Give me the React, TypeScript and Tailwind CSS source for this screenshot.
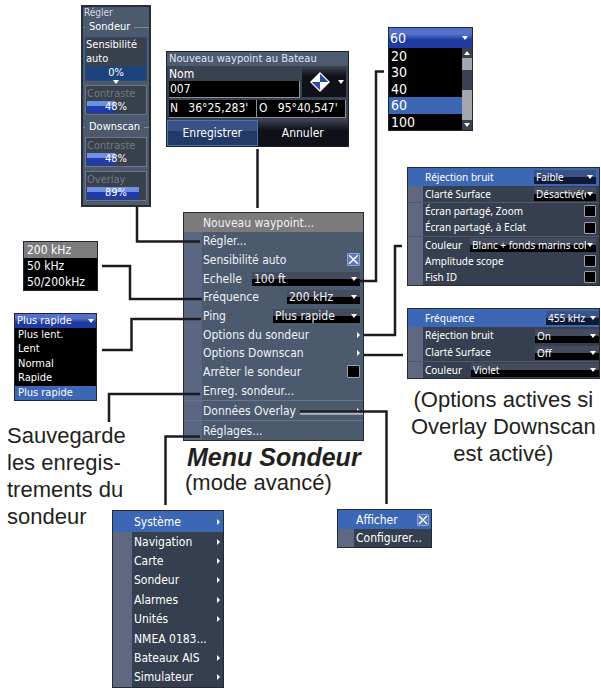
/**
 * Overview of the sonar menu (advanced mode): the main menu in the middle,
 * with each of its submenus and dialogs linked to the entry that opens it.
 */
import { useState } from 'react';
import type { ReactNode } from 'react';

function DownArrow({ className = '' }: { className?: string }) {
  return (
    <svg viewBox="0 0 6 4" className={`pointer-events-none h-1 w-1.5 fill-white ${className}`} aria-hidden="true">
      <path d="M0 0h6L3 4z" />
    </svg>
  );
}

function RightArrow() {
  return (
    <svg viewBox="0 0 3 6" className="h-1.5 w-[3px] shrink-0 fill-white" aria-hidden="true">
      <path d="M0 0l3 3-3 3z" />
    </svg>
  );
}

interface SelectRowProps {
  id: string;
  label: string;
  value: string;
  size: string;
  active?: boolean;
}

function SelectRow({ id, label, value, size, active }: SelectRowProps) {
  return (
    <div className="flex items-center justify-between gap-2">
      <label htmlFor={id} className="shrink-0">{label}</label>
      <div className={`relative ${size}`}>
        <select
          id={id}
          defaultValue={value}
          className={`block h-3.5 w-full appearance-none overflow-hidden bg-linear-to-b from-50% to-50% pr-2.5 pl-0.5 leading-3.5 outline-none ${
            active ? 'from-[#3a5288] to-[#101a38]' : 'from-[#434b5d] to-black'
          }`}
        >
          <option>{value}</option>
        </select>
        <DownArrow className="absolute top-[5px] right-[3px]" />
      </div>
    </div>
  );
}

function CheckRow({ id, label, checked = false, size }: { id: string; label: string; checked?: boolean; size: string }) {
  const [isChecked, setIsChecked] = useState(checked);
  return (
    <div className="flex items-center justify-between">
      <label htmlFor={id}>{label}</label>
      <span className={`relative block ${size}`}>
        <input
          id={id}
          type="checkbox"
          checked={isChecked}
          onChange={(e) => setIsChecked(e.target.checked)}
          className="block size-full appearance-none rounded-[1px] border border-[#9a9ea6] bg-black checked:border-[#8fa6d0] checked:bg-[#5877b4]"
        />
        {isChecked && (
          <svg viewBox="0 0 12 12" className="pointer-events-none absolute inset-0 size-full" aria-hidden="true">
            <path d="M2 2l8 8M10 2l-8 8" stroke="white" strokeWidth="1.4" />
          </svg>
        )}
      </span>
    </div>
  );
}

function LinkRow({ label, arrow = false }: { label: string; arrow?: boolean }) {
  return (
    <button type="button" className="flex w-full items-center justify-between text-left whitespace-nowrap">
      {label}
      {arrow && <RightArrow />}
    </button>
  );
}

function Gauge({ label, value, fill }: { label: string; value: string; fill: string }) {
  return (
    <div className="border border-[#6b7688] bg-[#39414d] p-px">
      <div className="leading-3.5 text-[#747a82]">{label}</div>
      <div className="relative h-3 bg-[#39414d] text-center leading-3">
        <div className={`absolute inset-y-0 left-0 bg-linear-to-b from-[#6f8fe0] from-40% to-[#1f3cae] to-40% ${fill}`} />
        <span className="relative">{value}</span>
      </div>
    </div>
  );
}

function GroupTitle({ children }: { children: ReactNode }) {
  return (
    <h3 className="mb-0.5 flex h-4 items-center gap-1 text-[11px]">
      <span className="h-px w-0.5 bg-[#7c889c]" />
      {children}
      <span className="h-px flex-1 bg-[#7c889c]" />
    </h3>
  );
}

function AdjustPanel() {
  return (
    <section className="absolute top-[5px] left-[81px] w-[70px] border-2 border-[#262c38] bg-[#4d596d] text-[11px] text-white">
      <h2 className="pl-px text-[10px] leading-3 text-[#d5dbe4]">Régler</h2>
      <GroupTitle>Sondeur</GroupTitle>
      <div className="mx-0.5 border border-[#2b4a7a] bg-[#39414d]">
        <div className="leading-3.5">Sensibilité<br />auto</div>
        <div className="relative bg-[#1d437c] text-center leading-3.5">
          0%
          <DownArrow className="absolute -bottom-1 left-1/2 -translate-x-1/2" />
        </div>
      </div>
      <div className="mx-0.5 mt-1">
        <Gauge label="Contraste" value="48%" fill="w-[48%]" />
      </div>
      <div className="mt-1">
        <GroupTitle>Downscan</GroupTitle>
      </div>
      <div className="mx-0.5 mb-1 flex flex-col gap-1">
        <Gauge label="Contraste" value="48%" fill="w-[48%]" />
        <Gauge label="Overlay" value="89%" fill="w-[89%]" />
      </div>
    </section>
  );
}

function WaypointDialog() {
  return (
    <form
      className="absolute top-[51px] left-[166px] w-[183px] border border-[#1d222c] bg-[#3a4252] text-xs text-white"
      onSubmit={(e) => e.preventDefault()}
    >
      <h2 className="bg-[#4d5a70] pl-0.5 font-['DejaVu_Sans',sans-serif] text-[10px] leading-3.5 whitespace-nowrap text-[#dfe5ee]">
        Nouveau waypoint au Bateau
      </h2>
      <div className="flex gap-0.5 px-0.5 pt-px">
        <div className="min-w-0 flex-1">
          <label htmlFor="name" className="block leading-3.5">Nom</label>
          <input
            id="name"
            defaultValue="007"
            className="block h-[17px] w-full border-r border-b border-[#8b919c] bg-black px-px outline-none"
          />
        </div>
        <button type="button" aria-label="Symbole" className="flex h-[30px] w-11 items-center justify-between bg-linear-to-b from-[#3b4150] to-[#0e1118] to-30% pr-0.5 pl-2">
          <svg viewBox="0 0 18 18" className="size-5" aria-hidden="true">
            <path d="M9 0l9 9-9 9-9-9z" fill="white" />
            <path d="M9 1.5L16.5 9H9zM1.5 9H9v7.5z" fill="#2d4c9b" />
          </svg>
          <DownArrow />
        </button>
      </div>
      <div className="mx-0.5 mt-0.5 grid grid-cols-2 border-r border-b border-[#8b919c] bg-black leading-[17px] whitespace-pre">
        <span className="border-r border-[#8b919c] pl-px">N   36°25,283'</span>
        <span className="pl-0.5">O   95°40,547'</span>
      </div>
      <div className="mt-0.5 grid grid-cols-2">
        <button type="submit" className="h-[26px] border border-[#5172b0] bg-linear-to-b from-[#3a5283] from-40% to-[#223a68] to-40%">
          Enregistrer
        </button>
        <button type="button" className="h-[26px] bg-linear-to-b from-[#3b4150] to-[#0e1118] to-40%">
          Annuler
        </button>
      </div>
    </form>
  );
}

function RangeList() {
  return (
    <div className="absolute top-[27px] left-[388px] w-[85px] border border-[#23262e] bg-black text-sm text-white">
      <button type="button" className="flex h-5 w-full items-center justify-between bg-linear-to-b from-[#5570c8] from-30% to-[#1f3aa0] to-60% pr-1 pl-px">
        60
        <DownArrow />
      </button>
      <div className="flex">
        <ul role="listbox" aria-label="Echelle" className="grid h-[82px] flex-1 auto-rows-fr leading-4">
          <li role="option" className="pl-0.5">20</li>
          <li role="option" className="pl-0.5">30</li>
          <li role="option" className="pl-0.5">40</li>
          <li role="option" aria-selected="true" className="bg-[#3c67b4] pl-0.5">60</li>
          <li role="option" className="pl-0.5">100</li>
        </ul>
        <div className="flex w-2.5 flex-col bg-[#a3a7ad]">
          <span className="flex h-2.5 items-center justify-center bg-[#3a4150]">
            <DownArrow className="rotate-180" />
          </span>
          <span className="mt-3 h-5 bg-[#3a4150]" />
          <span className="mt-auto flex h-2.5 items-center justify-center bg-[#3a4150]">
            <DownArrow />
          </span>
        </div>
      </div>
    </div>
  );
}

function FrequencyList() {
  return (
    <ul role="listbox" aria-label="Fréquence" className="absolute top-[241px] left-[23px] w-[75px] border border-[#23262e] bg-black text-xs text-white">
      <li role="option" aria-selected="true" className="bg-[#7d7d7d] pl-[3px]">200 kHz</li>
      <li role="option" className="pl-[3px]">50 kHz</li>
      <li role="option" className="pl-[3px]">50/200kHz</li>
    </ul>
  );
}

function PingList() {
  return (
    <div className="absolute top-[313px] left-3.5 w-[83px] border border-[#23262e] bg-black text-[11px] text-white">
      <button type="button" className="flex h-3.5 w-full items-center justify-between bg-linear-to-b from-[#5570c8] from-30% to-[#1f3aa0] to-60% pr-0.5 pl-0.5">
        Plus rapide
        <DownArrow />
      </button>
      <ul role="listbox" aria-label="Ping" className="grid h-[72px] auto-rows-fr leading-3.5">
        <li role="option" className="pl-[3px]">Plus lent.</li>
        <li role="option" className="pl-[3px]">Lent</li>
        <li role="option" className="pl-[3px]">Normal</li>
        <li role="option" className="pl-[3px]">Rapide</li>
        <li role="option" aria-selected="true" className="bg-[#3c67b4] pl-[3px]">Plus rapide</li>
      </ul>
    </div>
  );
}

function MainMenu() {
  return (
    <nav
      aria-label="Menu Sondeur"
      className="absolute top-[212px] left-[183px] w-[181px] border border-[#262a33] bg-linear-to-r from-[#5b6683] from-[18px] to-[#4c5a6e] to-[18px] text-xs text-[#eef2f7]"
    >
      <div className="grid h-[19px] bg-[#7b7b7b] pl-[19px]">
        <LinkRow label="Nouveau waypoint..." />
      </div>
      <div className="grid h-[168px] auto-rows-fr pr-[3px] pl-[19px]">
        <LinkRow label="Régler..." />
        <CheckRow id="auto" label="Sensibilité auto" checked size="size-[13px]" />
        <SelectRow id="range" label="Echelle" value="100 ft" size="w-[108px]" />
        <SelectRow id="frequency" label="Fréquence" value="200 kHz" size="w-[73px]" />
        <SelectRow id="ping" label="Ping" value="Plus rapide" size="w-[87px]" />
        <LinkRow label="Options du sondeur" arrow />
        <LinkRow label="Options Downscan" arrow />
        <CheckRow id="stop" label="Arrêter le sondeur" size="size-[13px]" />
        <LinkRow label="Enreg. sondeur..." />
      </div>
      <div className="grid h-5 border-t border-[#66748a] pr-[3px] pl-[19px]">
        <LinkRow label="Données Overlay" arrow />
      </div>
      <div className="grid h-5 border-t border-[#66748a] pr-[3px] pl-[19px]">
        <LinkRow label="Réglages..." />
      </div>
    </nav>
  );
}

function SonarOptions() {
  return (
    <div className="absolute top-[167px] left-[407px] w-[193px] border border-[#262a33] bg-linear-to-r from-[#5f6880] from-[15px] to-[#363f4f] to-[15px] font-['Noto_Sans',sans-serif] text-[10px] text-white">
      <div className="grid h-[18px] bg-[#3c67b4] pr-[3px] pl-[17px]">
        <SelectRow id="noise" label="Réjection bruit" value="Faible" size="w-[62px]" active />
      </div>
      <div className="grid h-4 pr-[3px] pl-[17px]">
        <SelectRow id="surface" label="Clarté Surface" value="Désactivé(e)" size="w-[62px]" />
      </div>
      <div className="grid h-[34px] auto-rows-fr border-t border-[#4f596b] pr-[3px] pl-[17px]">
        <CheckRow id="split-zoom" label="Écran partagé, Zoom" size="size-3" />
        <CheckRow id="split-flasher" label="Écran partagé, à Eclat" size="size-3" />
      </div>
      <div className="grid h-[49px] auto-rows-fr border-t border-[#4f596b] pr-[3px] pl-[17px]">
        <SelectRow id="colour" label="Couleur" value="Blanc + fonds marins colorés" size="w-[126px]" />
        <CheckRow id="scope" label="Amplitude scope" size="size-3" />
        <CheckRow id="fish" label="Fish ID" size="size-3" />
      </div>
    </div>
  );
}

function DownscanOptions() {
  return (
    <div className="absolute top-[308px] left-[407px] w-[193px] border border-[#262a33] bg-linear-to-r from-[#5f6880] from-[15px] to-[#363f4f] to-[15px] font-['Noto_Sans',sans-serif] text-[10px] text-white">
      <div className="grid h-[18px] bg-[#3c67b4] pl-[17px]">
        <SelectRow id="ds-frequency" label="Fréquence" value="455 kHz" size="w-[53px]" active />
      </div>
      <div className="grid h-[34px] auto-rows-fr pl-[17px]">
        <SelectRow id="ds-noise" label="Réjection bruit" value="On" size="w-16" />
        <SelectRow id="ds-surface" label="Clarté Surface" value="Off" size="w-16" />
      </div>
      <div className="grid h-[17px] border-t border-[#4f596b] pl-[17px]">
        <SelectRow id="ds-colour" label="Couleur" value="Violet" size="w-32" />
      </div>
    </div>
  );
}

const SETTINGS = ['Navigation', 'Carte', 'Sondeur', 'Alarmes', 'Unités', 'NMEA 0183...', 'Bateaux AIS', 'Simulateur'];

function SettingsMenu() {
  return (
    <nav
      aria-label="Réglages"
      className="absolute top-[510px] left-28 w-[112px] border border-[#262a33] bg-linear-to-r from-[#5f6880] from-[19px] to-[#363f4f] to-[19px] text-xs text-white"
    >
      <div className="grid h-[21px] bg-[#3c67b4] pr-[3px] pl-[21px]">
        <LinkRow label="Système" arrow />
      </div>
      <div className="grid h-[155px] auto-rows-fr pr-[3px] pl-[21px]">
        {SETTINGS.map((label) => (
          <LinkRow key={label} label={label} arrow={!label.endsWith('...')} />
        ))}
      </div>
    </nav>
  );
}

function OverlayMenu() {
  return (
    <div className="absolute top-[509px] left-[337px] w-[95px] border border-[#262a33] bg-linear-to-r from-[#5f6880] from-[16px] to-[#363f4f] to-[16px] text-xs text-white">
      <div className="grid h-[19px] bg-[#3c67b4] pr-0.5 pl-[18px]">
        <CheckRow id="show" label="Afficher" checked size="size-3" />
      </div>
      <div className="grid h-[18px] pl-[18px]">
        <LinkRow label="Configurer..." />
      </div>
    </div>
  );
}

// Lines from each entry of the main menu to what it opens
function Connectors() {
  return (
    <svg
      width="601"
      height="690"
      className="pointer-events-none absolute top-0 left-0"
      fill="none"
      stroke="#1e1b20"
      strokeWidth="2.5"
      aria-hidden="true"
    >
      <path d="M300 413.5H363" stroke="#b4b8be" />
      <path d="M137 207V241.5H200" />
      <path d="M257.5 149V208" />
      <path d="M359 281H376V71.5H384" />
      <path d="M102 266H130V299H202" />
      <path d="M102 350H131.5V319H201" />
      <path d="M109 422V394H200" />
      <path d="M165.5 505V436.5H200" />
      <path d="M300 411.5H386.5V504" />
      <path d="M364 335H395V246H402" />
      <path d="M364 355H403" />
    </svg>
  );
}

export default function App() {
  return (
    <main className="min-h-screen overflow-x-auto bg-white font-['DejaVu_Sans_Condensed','Noto_Sans',sans-serif]">
      <div className="relative min-h-[690px] min-w-[601px]">
        <AdjustPanel />
        <WaypointDialog />
        <RangeList />
        <FrequencyList />
        <PingList />
        <MainMenu />
        <SonarOptions />
        <DownscanOptions />
        <SettingsMenu />
        <OverlayMenu />
        <Connectors />

        <div className="absolute top-[443px] left-[185px] font-['Liberation_Sans',Arial,sans-serif] text-[#231f20]">
          <h1 className="pl-0.5 text-[25px] leading-7 font-bold italic">Menu Sondeur</h1>
          <p className="text-[22px] leading-6">(mode avancé)</p>
        </div>
        <p className="absolute top-[422px] left-[7px] font-['Liberation_Sans',Arial,sans-serif] text-[22px] leading-[27px] text-[#231f20]">
          Sauvegarde<br />les enregis-<br />trements du<br />sondeur
        </p>
        <p className="absolute top-[386px] left-[411px] text-center font-['Liberation_Sans',Arial,sans-serif] text-[22px] leading-[27px] text-[#231f20]">
          (Options actives si<br />Overlay Downscan<br />est activé)
        </p>
      </div>
    </main>
  );
}
